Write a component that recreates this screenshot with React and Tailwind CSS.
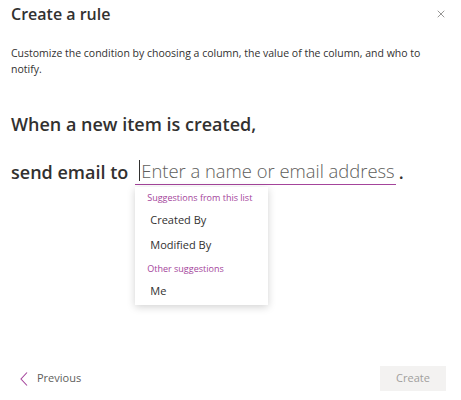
import { X } from "lucide-react";

const font = { fontFamily: '"Open Sans", "Noto Sans", sans-serif' };

function Suggestions() {
  return (
    <div className="absolute left-0 top-[calc(100%+2px)] w-[133px] bg-white py-[3px] shadow-[0_2px_8px_rgba(0,0,0,0.18)]">
      <div className="px-[12px] text-[9px] leading-[16px] text-[#a4449b]">Suggestions from this list</div>
      <div className="pt-[1px] px-[15px] text-[11px] leading-[25px] text-[#323130]">Created By</div>
      <div className="px-[15px] text-[11px] leading-[25px] text-[#323130]">Modified By</div>
      <div className="px-[12px] text-[9px] leading-[23px] text-[#a4449b]">Other suggestions</div>
      <div className="px-[15px] text-[11px] leading-[22px] text-[#323130]">Me</div>
    </div>
  );
}

export default function App() {
  return (
    <div style={font} className="flex h-[400px] w-[461px] flex-col bg-white text-[#323130]">
      <div className="flex items-center justify-between pl-[11px] pr-[14px] pt-[3px]">
        <h1 className="text-[16px] font-semibold leading-[22px]">Create a rule</h1>
        <X size={12} strokeWidth={1.3} className="text-[#605e5c]" />
      </div>

      <p className="mt-[20px] px-[11px] text-[10.5px] leading-[16px] text-[#323130]">
        Customize the condition by choosing a column, the value of the column, and who to notify.
      </p>

      <div className="mt-[35px] px-[11px] text-[18px] font-semibold leading-[24px]">When a new item is created,</div>

      <div className="mt-[22px] flex items-end px-[11px]">
        <span className="text-[18px] font-semibold leading-[26px]">send email to</span>
        <div className="relative ml-[7px]">
          <div className="flex items-end border-b-[1.5px] border-[#a4449b] pr-[1px]">
            <span className="mb-[3px] ml-[4px] h-[21px] w-px bg-[#323130]" />
            <span className="ml-[1px] text-[18.4px] font-light leading-[26px] text-[#605e5c]">Enter a name or email address</span>
          </div>
          <Suggestions />
        </div>
        <span className="ml-[3px] text-[18px] font-semibold leading-[26px]">.</span>
      </div>

      <div className="mt-auto flex items-center justify-between pb-[9px] pl-[20px] pr-[15px]">
        <button className="flex items-center gap-[9px] text-[11px] text-[#605e5c]">
          <svg width="8" height="14" viewBox="0 0 8 14" fill="none" stroke="#a4449b" strokeWidth="1.1">
            <path d="M7 0.5 L1 7 L7 13.5" />
          </svg>
          Previous
        </button>
        <button className="h-[25px] w-[66px] bg-[#f3f2f1] text-[11px] text-[#a19f9d]">Create</button>
      </div>
    </div>
  );
}
